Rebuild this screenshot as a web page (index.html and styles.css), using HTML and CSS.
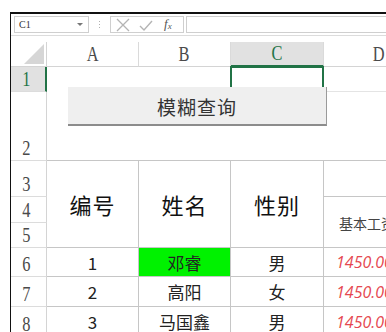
FILE: index.html
```html
<!DOCTYPE html>
<html>
<head>
<meta charset="utf-8">
<link rel="stylesheet" href="styles.css">
</head>
<body>
<div class="frame">
  <div class="fbar">
    <div class="namebox"><span class="nb-text">C1</span><span class="nb-arrow"></span></div>
    <div class="dots"><i></i><i></i><i></i></div>
    <div class="fxbox">
      <svg class="ic" width="16" height="14" viewBox="0 0 16 14"><path d="M2 1 L14 13 M14 1 L2 13" stroke="#b4b4b4" stroke-width="1.3" fill="none"/></svg>
      <svg class="ic" width="16" height="14" viewBox="0 0 16 14"><path d="M2 8 L6 12 L14 3" stroke="#b4b4b4" stroke-width="1.4" fill="none"/></svg>
      <span class="fx">f<sub>x</sub></span>
    </div>
    <div class="finput"></div>
  </div>
  <div class="sheet">
    <div class="corner"><svg width="22" height="22" viewBox="0 0 22 22"><polygon points="21,1 21,21 1,21" fill="#d6d6d6"/></svg></div>
    <div class="ch"><span>A</span></div>
    <div class="ch"><span>B</span></div>
    <div class="ch sel"><span>C</span></div>
    <div class="ch"><span>D</span></div>

    <div class="rh sel r1"><span>1</span></div>
    <div class="c r1 ca"></div>
    <div class="c r1 cb"></div>
    <div class="c r1 cc active"></div>
    <div class="c r1 cd"></div>

    <div class="rh r2"><span>2</span></div>
    <div class="c r2 ca top"></div>
    <div class="c r2 cb top"></div>
    <div class="c r2 cc top"></div>
    <div class="c r2 cd top"></div>

    <div class="rh r3"><span>3</span></div>
    <div class="rh r4"><span>4</span></div>
    <div class="rh r5"><span>5</span></div>
    <div class="t head ca">编号</div>
    <div class="t head cb">姓名</div>
    <div class="t head cc">性别</div>
    <div class="t r3 cd"></div>
    <div class="t d45 cd">基本工资</div>

    <div class="rh r6"><span>6</span></div>
    <div class="t r6 ca">1</div>
    <div class="t r6 cb green">邓睿</div>
    <div class="t r6 cc">男</div>
    <div class="t r6 cd num">1450.00</div>

    <div class="rh r7"><span>7</span></div>
    <div class="t r7 ca">2</div>
    <div class="t r7 cb">高阳</div>
    <div class="t r7 cc">女</div>
    <div class="t r7 cd num">1450.00</div>

    <div class="rh r8"><span>8</span></div>
    <div class="t r8 ca">3</div>
    <div class="t r8 cb">马国鑫</div>
    <div class="t r8 cc">男</div>
    <div class="t r8 cd num">1450.00</div>

    <div class="btn">模糊查询</div>
  </div>
</div>
</body>
</html>
```

FILE: styles.css
```css
html, body {
  margin: 0;
  padding: 0;
  background: #fff;
  overflow: hidden;
  width: 386px;
  height: 332px;
}
body {
  padding: 12px 0 0 10px;
  box-sizing: border-box;
  font-family: "Noto Sans CJK SC", "Noto Sans", sans-serif;
}
.frame {
  border-top: 2px solid #111;
  border-left: 1px solid #111;
  width: 420px;
  height: 340px;
}
.fbar {
  display: flex;
  align-items: flex-start;
  height: 22px;
  padding: 2px 0 0 3px;
  border-bottom: 1px solid #dcdcdc;
  box-sizing: border-box;
}
.namebox {
  width: 75px;
  height: 17px;
  border: 1px solid #cfcfcf;
  box-sizing: border-box;
  display: flex;
  align-items: center;
  justify-content: space-between;
  padding: 0 5px 0 4px;
}
.nb-text {
  font-family: "Liberation Serif", serif;
  font-size: 10px;
  color: #333;
}
.nb-arrow {
  width: 0; height: 0;
  border-left: 3px solid transparent;
  border-right: 3px solid transparent;
  border-top: 3px solid #777;
}
.dots {
  width: 21px;
  height: 17px;
  display: flex;
  flex-direction: column;
  align-items: center;
  justify-content: center;
  gap: 2px;
}
.dots i {
  display: block;
  width: 1px;
  height: 1px;
  background: #b0b0b0;
}
.fxbox {
  width: 74px;
  height: 17px;
  border: 1px solid #cfcfcf;
  box-sizing: border-box;
  display: flex;
  align-items: center;
  padding-left: 4px;
  gap: 7px;
}
.fx {
  font-family: "Liberation Serif", serif;
  font-style: italic;
  font-size: 13px;
  color: #555;
  line-height: 14px;
  margin-left: 3px;
}
.fx sub {
  font-size: 9px;
  vertical-align: -1px;
}
.finput {
  margin-left: 2px;
  flex: 1;
  height: 17px;
  border: 1px solid #cfcfcf;
  border-right: none;
  box-sizing: border-box;
}
.sheet {
  position: relative;
  margin-top: 6px;
  display: grid;
  grid-template-columns: 36px 92px 92px 93px 110px;
  grid-template-rows: 25px 25px 69px 36px 26px 25px 29px 30px 30px;
}
.sheet > div {
  box-sizing: border-box;
}
.corner {
  border-right: 1px solid #d4d4d4;
  border-bottom: 1px solid #d4d4d4;
  display: flex;
  align-items: flex-end;
  justify-content: flex-end;
  padding: 0 1px 1px 0;
}
.corner svg { display: block; }
.ch {
  border-right: 1px solid #dadada;
  border-bottom: 1px solid #d4d4d4;
  font-family: "Liberation Serif", serif;
  font-size: 21px;
  color: #4a4a4a;
  display: flex;
  align-items: center;
  justify-content: center;
}
.ch span, .rh span {
  display: inline-block;
  transform: scaleX(0.78);
}
.ch.sel {
  background: #e1e1e1;
  color: #217346;
  border-bottom: 2px solid #217346;
}
.rh {
  grid-column: 1;
  border-right: 1px solid #d4d4d4;
  border-bottom: 1px solid #dcdcdc;
  font-family: "Liberation Serif", serif;
  font-size: 21px;
  color: #4a4a4a;
  display: flex;
  align-items: flex-end;
  justify-content: center;
  line-height: 22px;
  padding-bottom: 1px;
  padding-right: 4px;
}
.rh.sel {
  background: #e1e1e1;
  color: #217346;
  border-right: 2px solid #217346;
}
.r1 { grid-row: 2; }
.r2 { grid-row: 3; }
.r3 { grid-row: 4; }
.r4 { grid-row: 5; }
.r5 { grid-row: 6; }
.r6 { grid-row: 7; }
.r7 { grid-row: 8; }
.r8 { grid-row: 9; }
.ca { grid-column: 2; }
.cb { grid-column: 3; }
.cc { grid-column: 4; }
.cd { grid-column: 5; }
.c.top { border-bottom: 1px solid #c6c6c6; }
.c.cd.r1 { border-bottom: 1px solid #e4e4e4; }
.active {
  position: relative;
}
.active::after {
  content: "";
  position: absolute;
  left: -1px;
  top: -1px;
  right: 0;
  bottom: -1px;
  border: 2px solid #217346;
}
.t {
  border-right: 1px solid #c6c6c6;
  border-bottom: 1px solid #c6c6c6;
  display: flex;
  align-items: center;
  justify-content: center;
  font-size: 17px;
  color: #222;
  white-space: nowrap;
  overflow: hidden;
}
.t.head {
  grid-row: 4 / span 3;
  font-size: 22px;
  letter-spacing: 1px;
  color: #111;
}
.t.d45 {
  grid-row: 5 / span 2;
  justify-content: flex-start;
  padding-left: 15px;
  font-size: 14px;
  color: #444;
  padding-top: 2px;
}
.t.green { background: #00f200; }
.t.num {
  justify-content: flex-start;
  padding-left: 12px;
  font-family: "Open Sans", "Noto Sans", sans-serif;
  font-style: italic;
  font-size: 16px;
  color: #e5474f;
}
.btn {
  position: absolute;
  left: 57px;
  top: 45px;
  width: 259px;
  height: 39px;
  box-sizing: border-box;
  background: #efefef;
  border-right: 1px solid #9a9a9a;
  border-bottom: 2px solid #8c8c8c;
  display: flex;
  align-items: center;
  justify-content: center;
  font-size: 19px;
  letter-spacing: 1px;
  color: #333;
  padding-top: 1px;
}
```
